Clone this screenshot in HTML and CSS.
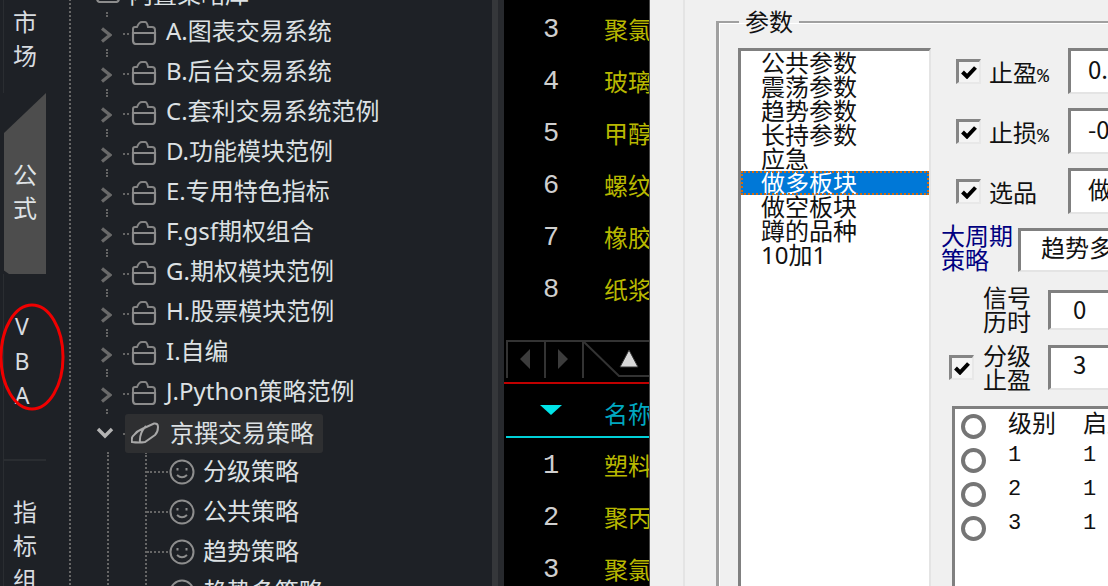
FILE: index.html
```html
<!DOCTYPE html>
<html lang="zh">
<head>
<meta charset="utf-8">
<title>策略</title>
<link rel="stylesheet" href="styles.css">
</head>
<body>
<svg width="0" height="0" class="defs">
  <symbol id="chev" viewBox="0 0 12 16"><path d="M2 1.5 L10 8 L2 14.5" fill="none" stroke="#6a6a6a" stroke-width="3.2"/></symbol>
  <symbol id="folder" viewBox="0 0 26 24"><path d="M2 13 V8 Q2 6 4 6 H6 Q8 1 11 1 H14 Q16 1 17 6 H21 Q24 6 24 9 V13" fill="none" stroke="#858585" stroke-width="2"/><path d="M2 12 H24 V19 Q24 23 21 23 H5 Q2 23 2 19 Z" fill="none" stroke="#8c8c8c" stroke-width="2.2"/></symbol>
  <symbol id="smile" viewBox="0 0 26 26"><circle cx="13" cy="13" r="11.5" fill="none" stroke="#8e8e8e" stroke-width="2"/><path d="M8.5 9 v2.5 M17.5 9 v2.5" stroke="#8e8e8e" stroke-width="2"/><path d="M8 16 Q13 20.5 18 16" fill="none" stroke="#8e8e8e" stroke-width="2"/></symbol>
  <symbol id="check" viewBox="0 0 16 14"><path d="M1.5 7 L6 11.5 L14.5 2.5" fill="none" stroke="#000" stroke-width="4"/></symbol>
</svg>
<div class="app">
  <nav class="rail">
    <div class="rail-sec rail-top">市<br>场</div>
    <div class="rail-tab">公<br>式</div>
    <div class="rail-sec rail-vba">V<br>B<br>A</div>
    <div class="rail-sec rail-ind">指<br>标<br>组</div>
  </nav>
  <svg class="ring" width="68" height="112" viewBox="0 0 68 112"><ellipse cx="32" cy="56" rx="31" ry="52" fill="none" stroke="#f00000" stroke-width="3"/></svg>

  <section class="tree">
    <div class="row row-top"><svg class="ic-folder"><use href="#folder"/></svg><span class="lbl-top">内置策略库</span></div>
    <div class="row"><div class="toggle"><i></i><svg class="chev"><use href="#chev"/></svg><i></i></div><b class="conn"></b><svg class="ic-folder"><use href="#folder"/></svg><span class="lbl">A.图表交易系统</span></div>
    <div class="row"><div class="toggle"><i></i><svg class="chev"><use href="#chev"/></svg><i></i></div><b class="conn"></b><svg class="ic-folder"><use href="#folder"/></svg><span class="lbl">B.后台交易系统</span></div>
    <div class="row"><div class="toggle"><i></i><svg class="chev"><use href="#chev"/></svg><i></i></div><b class="conn"></b><svg class="ic-folder"><use href="#folder"/></svg><span class="lbl">C.套利交易系统范例</span></div>
    <div class="row"><div class="toggle"><i></i><svg class="chev"><use href="#chev"/></svg><i></i></div><b class="conn"></b><svg class="ic-folder"><use href="#folder"/></svg><span class="lbl">D.功能模块范例</span></div>
    <div class="row"><div class="toggle"><i></i><svg class="chev"><use href="#chev"/></svg><i></i></div><b class="conn"></b><svg class="ic-folder"><use href="#folder"/></svg><span class="lbl">E.专用特色指标</span></div>
    <div class="row"><div class="toggle"><i></i><svg class="chev"><use href="#chev"/></svg><i></i></div><b class="conn"></b><svg class="ic-folder"><use href="#folder"/></svg><span class="lbl">F.gsf期权组合</span></div>
    <div class="row"><div class="toggle"><i></i><svg class="chev"><use href="#chev"/></svg><i></i></div><b class="conn"></b><svg class="ic-folder"><use href="#folder"/></svg><span class="lbl">G.期权模块范例</span></div>
    <div class="row"><div class="toggle"><i></i><svg class="chev"><use href="#chev"/></svg><i></i></div><b class="conn"></b><svg class="ic-folder"><use href="#folder"/></svg><span class="lbl">H.股票模块范例</span></div>
    <div class="row"><div class="toggle"><i></i><svg class="chev"><use href="#chev"/></svg><i></i></div><b class="conn"></b><svg class="ic-folder"><use href="#folder"/></svg><span class="lbl">I.自编</span></div>
    <div class="row"><div class="toggle"><i></i><svg class="chev"><use href="#chev"/></svg><i></i></div><b class="conn"></b><svg class="ic-folder"><use href="#folder"/></svg><span class="lbl">J.Python策略范例</span></div>
    <div class="row row-open">
      <div class="toggle"><svg class="chev-down" viewBox="0 0 18 12"><path d="M2 2 L9 9 L16 2" fill="none" stroke="#b4b4b4" stroke-width="3.4"/></svg></div>
      <b class="conn conn-short"></b>
      <div class="selected">
        <svg class="ic-leaf" viewBox="0 0 28 22"><path d="M1 20 Q0 15 3 13 Q6 9 11 7 L23 1.5 Q27 1 27 5 Q27 10 24 13 L14 20 Q8 21 1 20 Z M15 4 Q8 11 9 21" fill="none" stroke="#a8a8a8" stroke-width="2"/></svg>
        <span class="lbl lbl-sel">京撰交易策略</span>
      </div>
    </div>
    <div class="children">
      <div class="kids">
        <div class="kid"><b class="kconn"></b><svg class="ic-smile"><use href="#smile"/></svg><span class="lbl lbl-kid">分级策略</span></div>
        <div class="kid"><b class="kconn"></b><svg class="ic-smile"><use href="#smile"/></svg><span class="lbl lbl-kid">公共策略</span></div>
        <div class="kid"><b class="kconn"></b><svg class="ic-smile"><use href="#smile"/></svg><span class="lbl lbl-kid">趋势策略</span></div>
        <div class="kid"><b class="kconn"></b><svg class="ic-smile"><use href="#smile"/></svg><span class="lbl lbl-kid">趋势多策略</span></div>
      </div>
    </div>
  </section>

  <div class="stripe stripe-a"></div>
  <div class="stripe stripe-b"></div>

  <section class="quotes">
    <div class="q-row"><span class="q-num">3</span><span class="q-name">聚氯乙烯</span></div>
    <div class="q-row"><span class="q-num">4</span><span class="q-name">玻璃指数</span></div>
    <div class="q-row"><span class="q-num">5</span><span class="q-name">甲醇指数</span></div>
    <div class="q-row"><span class="q-num">6</span><span class="q-name">螺纹指数</span></div>
    <div class="q-row"><span class="q-num">7</span><span class="q-name">橡胶指数</span></div>
    <div class="q-row"><span class="q-num">8</span><span class="q-name">纸浆指数</span></div>
    <svg class="tabbar" width="146" height="38" viewBox="0 0 146 38">
      <path d="M3 38 V1 H146 M41 1 V38 M79 1 V38 M80 2 L115 36 H146" fill="none" stroke="#333" stroke-width="2"/>
      <path d="M16 19 L26 9 V29 Z M64 19 L54 9 V29 Z" fill="#3c3c3c"/>
      <path d="M125 10 L134 27 H116 Z" fill="#d8d8d8" stroke="#333" stroke-width="1"/>
    </svg>
    <div class="red-line"></div>
    <div class="q-head">
      <span class="q-num q-sort"><svg class="sort" width="24" height="12" viewBox="0 0 24 12"><path d="M1 1 H23 L12 11 Z" fill="#00e4e8"/></svg></span>
      <span class="q-name q-cyan">名称</span>
    </div>
    <div class="cyan-line"></div>
    <div class="q-row"><span class="q-num">1</span><span class="q-name">塑料指数</span></div>
    <div class="q-row"><span class="q-num">2</span><span class="q-name">聚丙烯</span></div>
    <div class="q-row"><span class="q-num">3</span><span class="q-name">聚氯乙烯</span></div>
  </section>

  <section class="dialog">
    <div class="etch"></div>
    <fieldset class="group">
      <legend class="legend">参数</legend>
      <div class="group-body">
        <ul class="list">
          <li>公共参数</li>
          <li>震荡参数</li>
          <li>趋势参数</li>
          <li>长持参数</li>
          <li>应急</li>
          <li class="on">做多板块</li>
          <li>做空板块</li>
          <li>蹲的品种</li>
          <li>10加1</li>
        </ul>
        <div class="form">
          <div class="f-row f-check"><span class="cb"><svg width="16" height="14"><use href="#check"/></svg></span><span class="f-lbl">止盈<span class="pct">%</span></span><span class="field">0.5</span></div>
          <div class="f-row f-check"><span class="cb"><svg width="16" height="14"><use href="#check"/></svg></span><span class="f-lbl">止损<span class="pct">%</span></span><span class="field">-0.5</span></div>
          <div class="f-row f-check"><span class="cb"><svg width="16" height="14"><use href="#check"/></svg></span><span class="f-lbl">选品</span><span class="field">做多板块</span></div>
          <div class="f-row f-big"><span class="f-navy">大周期策略</span><span class="field">趋势多策略</span></div>
          <div class="f-row f-sig"><span class="f-two">信号历时</span><span class="field field-num">0</span></div>
          <div class="f-row f-lvl"><span class="cb"><svg width="16" height="14"><use href="#check"/></svg></span><span class="f-two">分级止盈</span><span class="field field-num">3</span></div>
          <div class="levels">
            <div class="lv-row"><span class="radio"></span><span class="lv-a">级别</span><span>启用</span></div>
            <div class="lv-row"><span class="radio"></span><span class="lv-a lv-d">1</span><span class="lv-d">1</span></div>
            <div class="lv-row"><span class="radio"></span><span class="lv-a lv-d">2</span><span class="lv-d">1</span></div>
            <div class="lv-row"><span class="radio"></span><span class="lv-a lv-d">3</span><span class="lv-d">1</span></div>
          </div>
        </div>
      </div>
    </fieldset>
  </section>
</div>
</body>
</html>
```
FILE: styles.css
```css
* { box-sizing: border-box; }
html, body { margin: 0; height: 100%; overflow: hidden; background: #1e2126; }
.defs { position: absolute; }
.app {
  position: relative;
  display: flex;
  width: 1108px;
  height: 586px;
  overflow: hidden;
  font-family: "Noto Sans", "Noto Sans CJK SC", sans-serif;
  font-size: 24px;
}

/* left rail */
.rail { flex: none; width: 69px; padding-left: 4px; color: #d8dce0; display: flex; flex-direction: column; }
.rail-sec { flex: none; width: 42px; text-align: center; line-height: 34px; box-shadow: -1px 0 0 #2a2d31; }
.rail-top { height: 93px; padding-top: 5px; }
.rail-tab {
  flex: none; width: 42px; height: 181px; padding-top: 65px;
  background: #4d4d4d; color: #dfe3e6; text-align: center; line-height: 33px;
  clip-path: polygon(0 40px, 100% 0, 100% 100%, 5px 100%, 0 98%);
}
.rail-vba { height: 187px; padding: 35px 6px 0 0; font-size: 23px; border-bottom: 2px solid #2a2d31; line-height: 34.5px; }
.rail-ind { height: 125px; padding-top: 34px; line-height: 34px; }
.ring { position: absolute; left: 0; top: 301px; }

/* tree */
.tree { flex: none; width: 423px; border-left: 2px dotted #666; margin-top: -28px; height: 700px; color: #dde1e4; }
.row { display: flex; align-items: center; height: 40px; }
.row-top { padding-left: 24px; align-items: flex-start; padding-top: 7px; }
.lbl-top { margin-left: 8px; line-height: 30px; }
.toggle { flex: none; width: 12px; margin-left: 29px; height: 40px; display: flex; flex-direction: column; }
.toggle i { display: block; width: 2px; height: 3px; margin-left: 6px; border-left: 2px dotted #666; }
.chev { width: 12px; height: 16px; margin: 12px 0 6px; }
.row-open { height: 40px; }
.chev-down { width: 18px; height: 12px; margin: 15px 0 0 -4px; display: block; }
.conn { flex: none; width: 6px; margin-left: 11px; margin-top: 4px; border-top: 2px dotted #666; }
.conn-short { width: 2px; }
.ic-folder { flex: none; width: 26px; height: 24px; margin-left: 2px; margin-top: 2px; }
.row-top .ic-folder { margin: 0; }
.lbl { margin-left: 9px; line-height: 40px; white-space: nowrap; margin-top: -2px; }
.selected { display: flex; align-items: center; width: 198px; height: 39px; padding-left: 6px; margin-top: 2px; background: #2e2f31; border-radius: 3px; }
.ic-leaf { flex: none; width: 28px; height: 22px; }
.lbl-sel { margin-left: 11px; margin-top: 0; }
.children { margin-left: 36px; border-left: 2px dotted #666; }
.kids { margin-left: 36px; border-left: 2px dotted #666; }
.kid { display: flex; align-items: center; height: 40px; }
.kconn { flex: none; width: 21px; border-top: 2px dotted #666; }
.ic-smile { flex: none; width: 26px; height: 26px; margin-left: 1px; }
.lbl-kid { margin-left: 8px; margin-top: -2px; }

/* separators */
.stripe { flex: none; width: 6px; }
.stripe-a { background: #35373a; }
.stripe-b { background: #27292d; }

/* quote board */
.quotes { flex: none; width: 145px; background: #000; padding-top: 2px; overflow: hidden; }
.q-row, .q-head { display: flex; align-items: center; height: 52px; white-space: nowrap; }
.q-num { flex: none; width: 94px; text-align: center; color: #cfcfcf; font-family: "Liberation Mono", monospace; font-size: 27px; line-height: 48px; margin-top: 4px; }
.q-name { margin-left: 6px; color: #b8b800; margin-top: 4px; line-height: 48px; }
.q-sort { margin-top: 0; line-height: 0; }
.q-cyan { color: #00a8c0; margin-top: 8px; }
.tabbar { display: block; margin-top: 26px; }
.red-line { height: 2px; margin-top: 4px; background: #c00000; }
.sort { display: block; margin: 0 auto; }
.cyan-line { height: 2px; margin-left: 2px; background: #00d0d8; }

/* dialog */
.dialog { flex: 1; display: flex; background: #f0f0f0; border-left: 1px solid #4a4a4a; color: #111; overflow: hidden; min-width: 0; }
.etch { flex: none; width: 2px; margin-left: 33px; background: #e4e4e4; }
.group {
  flex: none; width: 460px; margin: 10px 0 0 31px; padding: 0;
  border: 0; border-top: 2px solid #a0a0a0; border-left: 3px solid #a0a0a0;
  box-shadow: inset 1px 1px 0 #fff;
  min-width: 0; height: 600px;
}
.legend { margin-left: 20px; padding: 0 6px; line-height: 24px; font-size: 24px; }
.group-body { display: flex; height: 560px; margin-top: 14px; box-shadow: none; }
.list {
  flex: none; width: 193px; margin: 0 0 0 19px; padding: 0; list-style: none; height: 560px;
  background: #fff; border-style: solid; border-width: 3px 2px 0 3px; border-color: #808080 #e4e4e4 #e4e4e4 #808080;
  overflow: hidden;
}
.list li { height: 24px; line-height: 24px; padding-left: 20px; white-space: nowrap; }
.list li.on { background: #0078d7; color: #fff; margin: 0; outline: 2px dotted #d06a10; outline-offset: -2px; }
.form { flex: none; width: 190px; padding-left: 10px; display: flex; flex-direction: column; }
.f-row { display: flex; align-items: center; flex: none; white-space: nowrap; }
.f-check { height: 46px; margin-bottom: 14px; padding-left: 15px; }
.cb {
  flex: none; display: flex; align-items: center; justify-content: center; width: 25px; height: 25px;
  background: #f4f4f4; border-style: solid; border-width: 3px 2px 2px 3px; border-color: #858585 #e8e8e8 #e8e8e8 #858585;
}
.f-lbl { flex: none; width: 79px; margin-left: 8px; }
.pct { font-family: "Liberation Mono", monospace; font-size: 20px; }
.field {
  flex: none; width: 140px; height: 100%; padding-left: 17px; overflow: hidden;
  background: #fff; border-style: solid; border-width: 3px 0 2px 3px; border-color: #808080 #e4e4e4 #e4e4e4 #808080;
  line-height: 36px; font-family: "Noto Sans CJK SC", sans-serif;
}
.f-big { height: 44px; margin-bottom: 18px; }
.f-navy { flex: none; width: 77px; color: #000080; line-height: 24px; white-space: normal; margin-top: -4px; }
.f-big .field { padding-left: 20px; line-height: 32px; }
.f-two { flex: none; width: 65px; line-height: 24px; white-space: normal; padding-right: 17px; }
.f-sig { height: 40px; margin-bottom: 15px; padding-left: 42px; }
.field-num { padding-left: 22px; line-height: 32px; }
.f-lvl { height: 45px; margin-bottom: 16px; padding-left: 8px; }
.f-lvl .f-two { margin-left: 9px; }
.levels {
  flex: none; width: 160px; height: 200px; margin-left: 11px; padding: 0 0 0 6px;
  background: #fff; border-style: solid; border-width: 3px 0 0 3px; border-color: #808080; overflow: hidden;
}
.lv-row { display: flex; align-items: center; height: 34px; white-space: nowrap; }
.lv-row span { line-height: 28px; margin-top: -6px; }
.lv-row .radio { flex: none; width: 25px; height: 25px; margin-top: 0; border: 4px solid #757575; border-radius: 50%; }
.lv-a { flex: none; width: 75px; margin-left: 22px; }
.lv-row .lv-d { font-family: "Liberation Mono", monospace; font-size: 22px; margin-top: -8px; }
```
